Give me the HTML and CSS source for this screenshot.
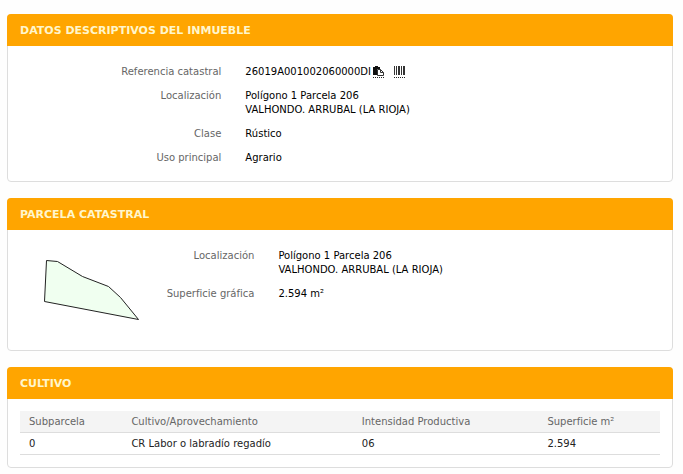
FILE: index.html
```
<!DOCTYPE html>
<html lang="es">
<head>
    <meta charset="utf-8">
    <title>Consulta de datos catastrales</title>
    <link rel="stylesheet" href="styles.css">
</head>
<body>

<section class="panel">
    <h2>DATOS DESCRIPTIVOS DEL INMUEBLE</h2>
    <dl class="datos">
        <dt>Referencia catastral</dt>
        <dd class="referencia">
            <span>26019A001002060000DI</span>
            <a href="#" class="icono" aria-label="Copiar referencia">
                <svg width="11" height="11" viewBox="0 0 11 11">
                    <path d="M0 1h2V0h3v1h2v2H4v6H0z" fill="#111"/>
                    <path d="M4.500 3.500h3l3 3v3h-6z" fill="#fff" stroke="#333"/>
                    <path d="M7.500 3.500v3h3" fill="none" stroke="#333"/>
                </svg>
            </a>
            <a href="#" class="icono" aria-label="Código de barras">
                <svg width="11" height="11" viewBox="0 0 11 11">
                    <path d="M0 0h1v9H0zM2 0h1v9H2zM4 0h2v9H4zM7 0h1v9H7zM9 0h2v9H9z" fill="#333"/>
                </svg>
            </a>
        </dd>
        <dt>Localización</dt>
        <dd>Polígono 1 Parcela 206<br>VALHONDO. ARRUBAL (LA RIOJA)</dd>
        <dt>Clase</dt>
        <dd>Rústico</dd>
        <dt>Uso principal</dt>
        <dd>Agrario</dd>
    </dl>
</section>

<section class="panel">
    <h2>PARCELA CATASTRAL</h2>
    <div class="parcela">
        <svg class="mapa" width="120" height="88" viewBox="0 0 120 88">
            <path d="M26.500 12.500L37.500 13.500L62.500 28.500L88.500 38.500L100.500 49.500L118.500 71.500L24.500 53.500z" fill="#f0fff0" stroke="#222"/>
        </svg>
        <dl class="datos">
            <dt>Localización</dt>
            <dd>Polígono 1 Parcela 206<br>VALHONDO. ARRUBAL (LA RIOJA)</dd>
            <dt>Superficie gráfica</dt>
            <dd>2.594 m²</dd>
        </dl>
    </div>
</section>

<section class="panel">
    <h2>CULTIVO</h2>
    <div class="cultivo">
        <table>
            <thead>
                <tr>
                    <th class="sub">Subparcela</th>
                    <th class="aprov">Cultivo/Aprovechamiento</th>
                    <th class="intens">Intensidad Productiva</th>
                    <th>Superficie m²</th>
                </tr>
            </thead>
            <tbody>
                <tr>
                    <td>0</td>
                    <td>CR Labor o labradío regadío</td>
                    <td>06</td>
                    <td>2.594</td>
                </tr>
            </tbody>
        </table>
    </div>
</section>

</body>
</html>
```
FILE: styles.css
```
body {
    margin: 14px 10px 0 7px;
    background: #fefefe;
    color: #000;
    font-family: Verdana, "DejaVu Sans", sans-serif;
    font-size: 10px;
    line-height: 14px;
}

.panel {
    margin-bottom: 16px;
    border: 1px solid #ddd;
    border-radius: 4px;
    background: #fff;
}

.panel:last-child {
    margin-bottom: 0;
}

h2 {
    margin: -1px -1px 0;
    padding: 10px 13px 8px;
    border-radius: 4px 4px 0 0;
    background: #ffa500;
    color: #fff6cc;
    font-size: 11px;
    line-height: 14px;
}

.datos {
    display: grid;
    grid-template-columns: 1fr 2fr;
    gap: 10px 24px;
    margin: 0;
    padding: 19px 0 16px;
}

dt {
    color: #666;
    text-align: right;
}

dd {
    margin: 0;
}

.referencia {
    display: flex;
    align-items: center;
}

.icono {
    height: 11px;
    margin-left: 2px;
    border-bottom: 1px dotted #222;
}

.icono + .icono {
    margin-left: 10px;
}

.icono svg {
    display: block;
}

/* parcela */
.parcela {
    display: flex;
    padding-left: 12px;
}

.parcela .datos {
    flex: 1;
    grid-template-columns: 1fr 4fr;
    padding-bottom: 49px;
}

.mapa {
    margin: 18px 16px 0 0;
}

/* cultivo */
.cultivo {
    padding: 12px;
}

table {
    width: 100%;
    border-collapse: collapse;
    table-layout: fixed;
}

th, td {
    box-sizing: border-box;
    padding: 4px 9px 3px;
    border-bottom: 1px solid #ddd;
    text-align: left;
    color: #222;
}

th {
    background: #f4f4f4;
    color: #666;
    font-weight: normal;
}

.sub {
    width: 16%;
}

.aprov {
    width: 36%;
}

.intens {
    width: 29%;
}
```
